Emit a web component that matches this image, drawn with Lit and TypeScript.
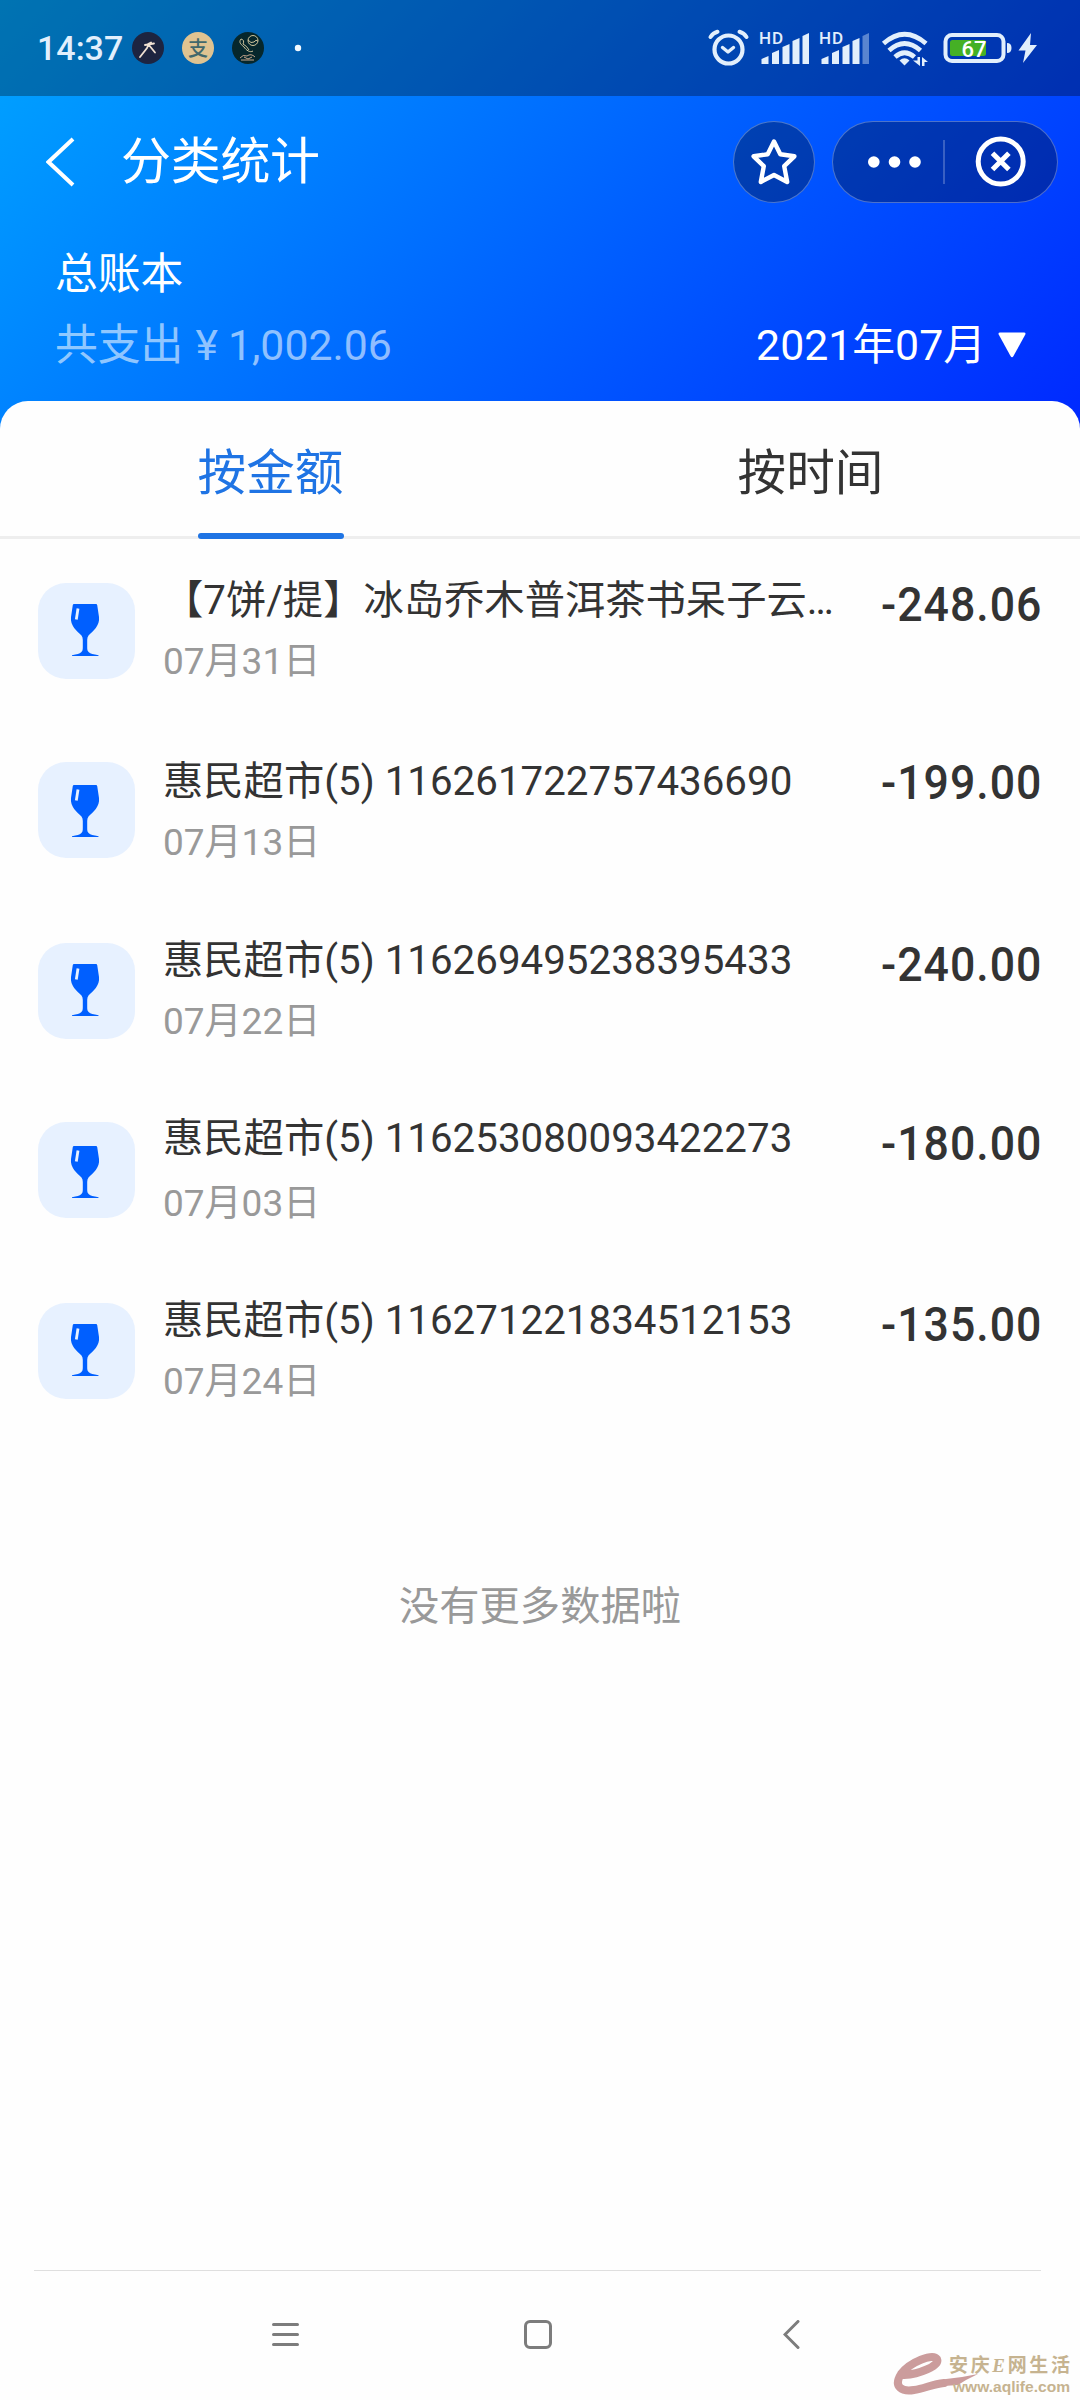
import { LitElement, html, css, svg } from "lit";
import { customElement } from "lit/decorators.js";
import { styleMap } from "lit/directives/style-map.js";

interface Bill {
  title: string;
  date: string;
  amount: string;
  /** Top spacing in px: tile, glass inside the tile, title, date, amount. */
  space: [number, number, number, number, number];
}

const BILLS: Bill[] = [
  { title: "【7饼/提】冰岛乔木普洱茶书呆子云…", date: "07月31日", amount: "-248.06", space: [44, 21, 34, 8, 36] },
  { title: "惠民超市(5) 116261722757436690", date: "07月13日", amount: "-199.00", space: [43, 23, 35, 8, 34] },
  { title: "惠民超市(5) 116269495238395433", date: "07月22日", amount: "-240.00", space: [44, 21, 34, 8, 36] },
  { title: "惠民超市(5) 116253080093422273", date: "07月03日", amount: "-180.00", space: [43, 24, 32, 12, 35] },
  { title: "惠民超市(5) 116271221834512153", date: "07月24日", amount: "-135.00", space: [44, 21, 34, 8, 36] },
];

const px = (n: number) => `${n}px`;

@customElement("bill-row")
export class BillRow extends LitElement {
  static properties = { bill: { attribute: false } };
  declare bill: Bill;

  static styles = css`
    :host { display: flex; height: 180px; padding: 0 38px; align-items: flex-start; }
    .tile { flex: none; width: 97px; height: 96px; box-sizing: border-box; border-radius: 28px; background: #e7f1ff; }
    .tile svg { display: block; margin-left: 32px; }
    .body { flex: 1; min-width: 0; margin-left: 28px; white-space: nowrap; }
    .title { font-size: 40.3px; line-height: 56px; color: #333; }
    .date { font-size: 37px; line-height: 50px; color: #999; }
    .amount { flex: none; font-size: 48.5px; line-height: 60px; font-weight: 500; letter-spacing: 1.1px; transform: scaleX(0.92); transform-origin: right; color: #333; }
  `;

  render() {
    const { title, date, amount, space } = this.bill;
    return html`
      <div class="tile" style=${styleMap({ marginTop: px(space[0]), paddingTop: px(space[1]) })}>
        <svg width="30" height="52" viewBox="0 0 30 52">
          <path d="M4 0H26Q27 0 27.200 1L29 13C30 22 23 27 18.500 31.500Q17.200 33 17.200 36V43C17.200 48 18 49.500 28.500 51.200V52H2V51.200C12 49.500 12.800 48 12.800 43V36Q12.800 33 11.500 31.500C7 27 0 22 1 13L2.800 1Q3 0 4 0Z" fill="#005fff"/>
          <path d="M8 4.500L6.300 15.500" stroke="#e7f1ff" stroke-width="2.800"/>
        </svg>
      </div>
      <div class="body">
        <div class="title" style=${styleMap({ marginTop: px(space[2]) })}>${title}</div>
        <div class="date" style=${styleMap({ marginTop: px(space[3]) })}>${date}</div>
      </div>
      <div class="amount" style=${styleMap({ marginTop: px(space[4]) })}>${amount}</div>
    `;
  }
}

const signal = (x: number, lastOpacity: number) => svg`
  <text x=${x - 2.5} y="44" font-size="17" font-weight="500" textLength="24">HD</text>
  <path d=${`M${x} 64V59L${x + 7} 56V64Z M${x + 10.500} 64V53L${x + 17.500} 50V64Z M${x + 21} 64V47L${x + 28} 44V64Z M${x + 31} 64V41L${x + 38} 38V64Z`}/>
  <path d=${`M${x + 41} 64V36L${x + 47.500} 33V64Z`} opacity=${lastOpacity}/>
`;

@customElement("status-bar")
export class StatusBar extends LitElement {
  static styles = css`
    :host { display: flex; height: 96px; background: rgba(0, 0, 0, 0.3); color: #e2effc; }
    .time { width: 94px; padding-left: 37px; line-height: 97px; font-size: 34px; font-weight: 500; white-space: nowrap; }
    svg { display: block; flex: none; }
    .right { margin-left: auto; }
    text { font-family: Roboto, "Noto Sans CJK SC", sans-serif; }
  `;

  render() {
    return html`
      <div class="time">14:37</div>
      <svg width="180" height="96" viewBox="131 0 180 96" fill="none">
        <circle cx="148" cy="48" r="16" fill="#1d2440"/>
        <path d="M140 57L147 48L148.500 44.500M148.500 44.500L155 52.500M145 45L154 43.500M148 44L151 42.500" stroke="#efe0d2" stroke-width="1.800" stroke-linecap="round"/>
        <circle cx="198" cy="48" r="16" fill="#dfc391"/>
        <text x="198" y="55.500" font-size="20" font-weight="500" text-anchor="middle" fill="#41686c">支</text>
        <circle cx="248" cy="48" r="16" fill="#06272c"/>
        <g stroke="#cfc59c" stroke-width="1">
          <circle cx="253" cy="40.500" r="5"/>
          <path d="M248 40Q251 44 254 42Q256 39 258 41M241 39C238 43 242 45 244 47C246 50 250 53 253 51M241 39Q245 40 243 44Q247 46 249 50"/>
          <path d="M240 58Q243 54 247 56Q251 53 255 57M241 60H254M244 57L248 59L252 57" stroke="#c4a68d"/>
        </g>
        <circle cx="298" cy="48" r="3.200" fill="#f2f9ff"/>
      </svg>
      <svg class="right" width="380" height="96" viewBox="700 0 380 96" fill="#e2effc">
        <g fill="none" stroke="#e2effc" stroke-linecap="round">
          <circle cx="728.500" cy="49.500" r="14" stroke-width="4.200"/>
          <path d="M722.500 47.500L728 52L733.500 47.500" stroke-width="3.400" stroke-linejoin="round"/>
          <path d="M710.500 37Q713 33 717.500 31.800M746.500 37Q744 33 739.500 31.800" stroke-width="4"/>
          <g stroke-width="4.800" stroke-linecap="butt">
            <path d="M883.500 43.500Q904.500 25 926 43.500"/>
            <path d="M889 50.500Q904.500 36.500 920.500 50.500"/>
            <path d="M895 57Q904.500 48.500 914.500 57"/>
          </g>
        </g>
        ${signal(761.5, 1)} ${signal(821.5, 0.4)}
        <path d="M899.500 60.500Q904.500 56 909.500 60.500L904.500 65.500Z"/>
        <path d="M917.500 57H920V66L913 60.500H917.500ZM922 66V57L928 62H924.500V66Z"/>
        <rect x="945.500" y="35" width="58" height="26" rx="6.500" fill="none" stroke="#e2effc" stroke-width="4"/>
        <rect x="950" y="40" width="36" height="16" rx="2.500" fill="#45b025"/>
        <text x="974" y="56.500" font-size="22" font-weight="500" text-anchor="middle" fill="#fff">67</text>
        <path d="M1007 43Q1011.500 43 1011.500 48T1007 53Z"/>
        <path d="M1031 33L1018.500 50.500H1025.500L1023 63L1037 45H1030Z"/>
      </svg>
    `;
  }
}

@customElement("app-root")
export class AppRoot extends LitElement {
  static styles = css`
    :host { display: flex; flex-direction: column; width: 1080px; height: 2400px; overflow: hidden; background: #fefefe; color: #333; font-family: Roboto, "Noto Sans CJK SC", sans-serif; white-space: nowrap; }
    svg { display: block; flex: none; }
    .top { flex: none; height: 430px; background: linear-gradient(135deg, #00a6ff, #0028ff); color: #fff; }
    .nav { display: flex; align-items: center; height: 132px; box-sizing: border-box; padding: 0 22px 0 46px; }
    .page-title { margin-left: 45px; font-size: 50px; line-height: 60px; letter-spacing: -0.3px; }
    .round { display: flex; box-sizing: border-box; align-items: center; justify-content: center; width: 82px; height: 82px; border-radius: 41px; margin-left: auto; background: rgba(0, 0, 0, 0.3); border: 1px solid rgba(255, 255, 255, 0.3); }
    .capsule { display: flex; box-sizing: border-box; align-items: center; width: 226px; height: 82px; border-radius: 41px; margin-left: 17px; background: rgba(0, 0, 0, 0.3); border: 1px solid rgba(255, 255, 255, 0.3); }
    .book { padding: 18px 54px 0 55px; font-size: 42.8px; line-height: 56px; }
    .line { display: flex; justify-content: space-between; margin-top: 15px; }
    .spent { color: rgba(255, 255, 255, 0.57); }
    .yen { margin: 0 10px 0 12px; }
    .month { display: flex; align-items: center; gap: 12px; }
    .sheet { flex: 1; display: flex; flex-direction: column; margin-top: -29px; border-radius: 28px 28px 0 0; background: #fefefe; }
    .tabs { display: flex; flex: none; height: 138px; box-sizing: border-box; border-bottom: 3px solid #eee; }
    .tab { flex: 1; display: flex; flex-direction: column; align-items: center; height: 138px; box-sizing: border-box; padding: 43px 0 0 1px; font-size: 48.6px; line-height: 60px; }
    .tab.on { color: #1f74e4; }
    .tab.on::after { content: ""; width: 146px; height: 6px; margin-top: 29px; border-radius: 3px; background: #1f74e4; }
    .end { margin-top: 140px; text-align: center; font-size: 40.3px; line-height: 56px; color: #999; }
    .bar { position: relative; flex: none; margin: auto 0 0 34px; height: 130px; }
    .rule { height: 1px; width: 1007px; background: #dfdfdf; }
    .keys { display: flex; align-items: center; padding: 49px 0 0 238px; }
    .home { box-sizing: border-box; width: 28px; height: 29px; border: 3px solid #7c7c7c; border-radius: 6px; margin: 0 231px 0 225px; }
    .mark { position: absolute; right: 0; bottom: 3px; }
    .mark text { font-family: "Liberation Sans", "Noto Sans CJK SC", sans-serif; font-weight: 700; }
  `;

  render() {
    return html`
      <div class="top">
        <status-bar></status-bar>
        <div class="nav">
          <svg width="30" height="52" viewBox="0 0 30 52" fill="none" stroke="#fff" stroke-width="4"><path d="M27 3L2.500 26L27 49"/></svg>
          <div class="page-title">分类统计</div>
          <div class="round">
            <svg width="50" height="50" viewBox="0 0 50 50" fill="none" stroke="#fff" stroke-width="4.400" stroke-linejoin="round">
              <path d="M25 4.500L31.300 17.300L45.400 19.300L35.200 29.200L38.200 45L25 38L11.800 45L14.800 29.200L4.600 19.300L18.700 17.300Z"/>
            </svg>
          </div>
          <div class="capsule">
            <svg width="224" height="80" viewBox="833.500 122 224 80" fill="#fff">
              <circle cx="874.300" cy="162" r="5.800"/><circle cx="895" cy="162" r="5.800"/><circle cx="915.500" cy="162" r="5.800"/>
              <path d="M944.500 140V184" stroke="#fff" stroke-opacity=".45"/>
              <g fill="none" stroke="#fff" stroke-width="5"><circle cx="1001.200" cy="161.500" r="22.500"/><path d="M993 153.200L1009.400 169.600M1009.400 153.200L993 169.600"/></g>
            </svg>
          </div>
        </div>
        <div class="book">
          <div>总账本</div>
          <div class="line">
            <div class="spent">共支出<span class="yen">¥</span>1,002.06</div>
            <div class="month">2021年07月
              <svg width="28" height="26" viewBox="0 0 28 26" fill="#fff"><path d="M2 0.500H26Q28 0.500 27.300 2.500L15.500 24Q14 26.500 12.500 24L0.700 2.500Q0 0.500 2 0.500Z"/></svg>
            </div>
          </div>
        </div>
      </div>
      <div class="sheet">
        <div class="tabs"><div class="tab on">按金额</div><div class="tab">按时间</div></div>
        ${BILLS.map((b) => html`<bill-row .bill=${b}></bill-row>`)}
        <div class="end">没有更多数据啦</div>
        <div class="bar">
          <div class="rule"></div>
          <div class="keys">
            <svg width="27" height="29" viewBox="0 0 27 29" stroke="#7c7c7c" stroke-width="3" stroke-linecap="round"><path d="M1.500 4.500H25.500M1.500 14.500H25.500M1.500 24.500H25.500"/></svg>
            <div class="home"></div>
            <svg width="17" height="29" viewBox="0 0 17 29" fill="none" stroke="#7c7c7c" stroke-width="3" stroke-linecap="round"><path d="M15 1.500L2 14.500L15 27.500"/></svg>
          </div>
          <svg class="mark" width="190" height="50" viewBox="890 2347 190 50">
            <path d="M904 2375C919 2374 940 2366 937 2359C933 2353 910 2362 901 2374C893 2387 902 2392 914 2390C924 2389 932 2384 944 2383" fill="none" stroke="#cb9c9c" stroke-width="8" stroke-linecap="round"/>
            <path d="M930 2384L946 2379L962 2377L978 2374L966 2380L958 2385L944 2386L928 2389Z" fill="#cb9c9c"/>
            <g fill="#c6b390">
              <text x="949" y="2372" font-size="19" textLength="121">安庆<tspan font-family="Liberation Serif" font-style="italic">E</tspan>网生活</text>
              <text x="953" y="2392" font-size="14" textLength="117" lengthAdjust="spacingAndGlyphs">www.aqlife.com</text>
            </g>
          </svg>
        </div>
      </div>
    `;
  }
}
